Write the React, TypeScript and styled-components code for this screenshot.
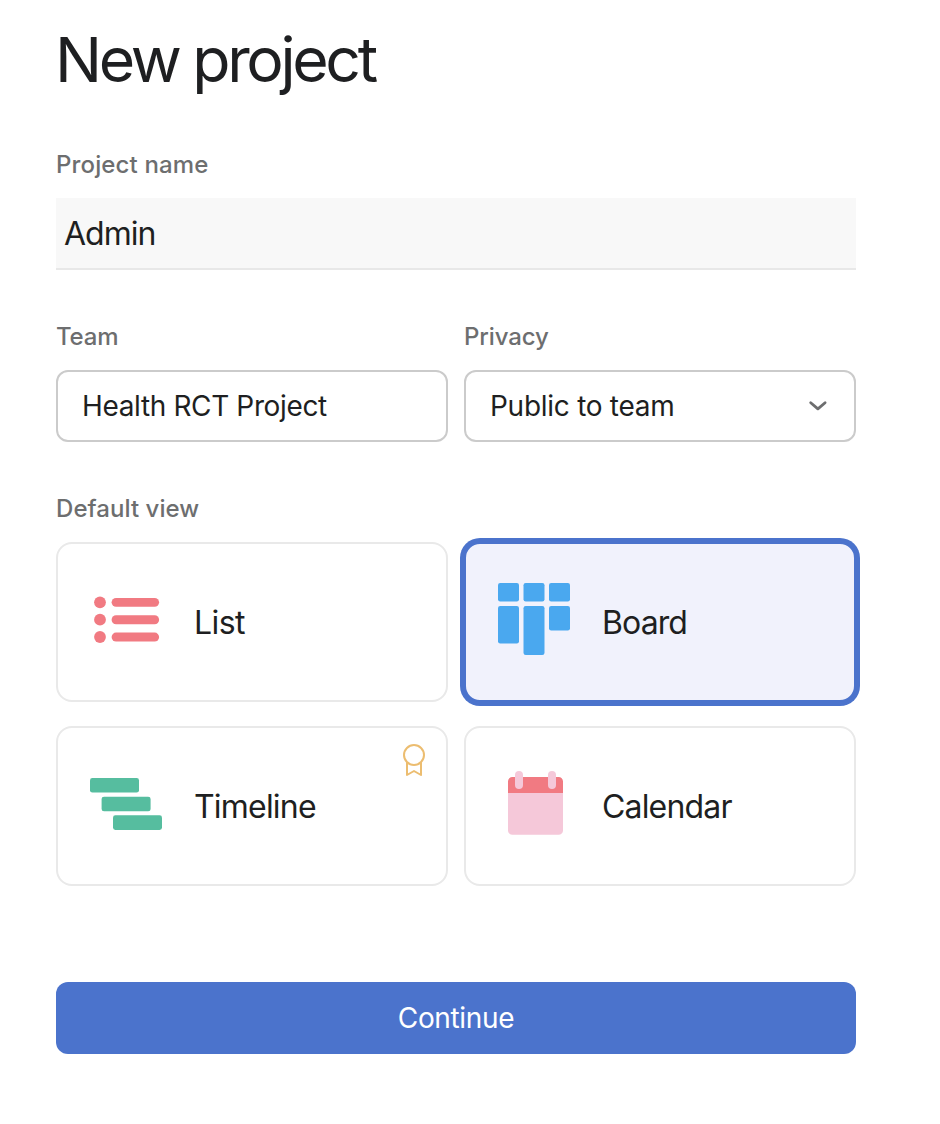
import React from "react";
import styled, { createGlobalStyle } from "styled-components";

const GlobalStyle = createGlobalStyle`
  *, *::before, *::after { box-sizing: border-box; }
  body {
    margin: 0;
    background: #fff;
    color: #1e1f21;
    font-family: Inter, "Liberation Sans", sans-serif;
    -webkit-font-smoothing: antialiased;
  }
  button, input { font: inherit; color: inherit; }
`;

const Form = styled.form`
  display: flex;
  flex-direction: column;
  width: 856px;
  min-height: 1124px;
  padding: 19px 0 0 56px;
`;

const Title = styled.h1`
  margin: 0 0 48px -1px;
  font-size: 62.5px;
  line-height: 80px;
  font-weight: 375;
  letter-spacing: -3.35px;
  word-spacing: -0.5px;
`;

const Field = styled.div`
  display: flex;
  flex-direction: column;
  gap: 15px;
  margin-bottom: 49px;
`;

const FieldRow = styled.div`
  display: grid;
  grid-template-columns: 1fr 1fr;
  gap: 16px;
`;

const Label = styled.span<{ $tracking?: number }>`
  font-size: 24px;
  line-height: 36px;
  font-weight: 500;
  letter-spacing: ${(p) => p.$tracking ?? 0}px;
  color: #6d6e6f;
  white-space: nowrap;
`;

const NameInput = styled.input`
  width: 100%;
  height: 72px;
  padding: 0 8px;
  border: 0;
  border-bottom: 2px solid #e8e8e8;
  border-radius: 0;
  outline: 0;
  background: #f8f8f8;
  font-size: 32px;
  letter-spacing: -1px;
`;

const Select = styled.button<{ $tracking?: number }>`
  display: flex;
  align-items: center;
  justify-content: space-between;
  height: 72px;
  padding: 0 24px;
  border: 2px solid #cbcbcb;
  border-radius: 12px;
  background: #fff;
  font-size: 28px;
  letter-spacing: ${(p) => p.$tracking ?? 0}px;
  white-space: nowrap;
`;

const Views = styled.div`
  display: grid;
  grid-template-columns: 1fr 1fr;
  gap: 24px 16px;
`;

const ViewCard = styled.button<{ $selected?: boolean }>`
  position: relative;
  display: flex;
  align-items: center;
  gap: 32px;
  height: 160px;
  padding: 0 32px;
  border: 2px solid ${(p) => (p.$selected ? "#4b73cc" : "#e9e9e9")};
  border-radius: 16px;
  background: ${(p) => (p.$selected ? "#f1f2fc" : "#fff")};
  box-shadow: ${(p) => (p.$selected ? "0 0 0 4px #4b73cc" : "none")};
`;

const ViewIcon = styled.svg`
  flex: none;
  width: 72px;
  height: 72px;
  margin-bottom: 6px;
`;

const ViewName = styled.span<{ $tracking?: number }>`
  padding-top: 2px;
  font-size: 32px;
  line-height: 48px;
  letter-spacing: ${(p) => p.$tracking ?? 0}px;
`;

const PremiumBadge = styled.svg`
  position: absolute;
  top: 14px;
  right: 20px;
  width: 24px;
  height: 36px;
`;

const Continue = styled.button`
  height: 72px;
  margin-top: 47px;
  border: 0;
  border-radius: 12px;
  background: #4b73cc;
  color: #fff;
  font-size: 28px;
  letter-spacing: -0.35px;
`;

const Chevron = () => (
  <svg width="24" height="24" viewBox="0 0 24 24" fill="none">
    <path d="M4.7 8.7 11.9 14.9 19.1 8.7" stroke="#6d6e6f" strokeWidth="2.8" strokeLinecap="round" strokeLinejoin="round" />
  </svg>
);

const ListIcon = () => (
  <ViewIcon viewBox="0 0 72 72" fill="#f17a82">
    {[19.3, 36.7, 54].map((y) => (
      <g key={y}>
        <circle cx="10" cy={y} r="5.9" />
        <rect x="21.6" y={y - 4.4} width="47.5" height="8.9" rx="4.45" />
      </g>
    ))}
  </ViewIcon>
);

const BoardIcon = () => (
  <ViewIcon viewBox="0 0 72 72" fill="#4aa8ef">
    <rect x="0" y="0" width="21" height="18.5" rx="2.2" />
    <rect x="25.5" y="0" width="21" height="18.5" rx="2.2" />
    <rect x="51" y="0" width="21" height="18.5" rx="2.2" />
    <rect x="0" y="23" width="21" height="37.5" rx="2.2" />
    <rect x="25.5" y="23" width="21" height="49" rx="2.2" />
    <rect x="51" y="23" width="21" height="24.5" rx="2.2" />
  </ViewIcon>
);

const TimelineIcon = () => (
  <ViewIcon viewBox="0 0 72 72" fill="#56bd9f">
    <rect x="0" y="11" width="49" height="14.6" rx="2.4" />
    <rect x="11.6" y="29.7" width="49" height="14.6" rx="2.4" />
    <rect x="23" y="48.3" width="49" height="14.6" rx="2.4" />
  </ViewIcon>
);

const CalendarIcon = () => (
  <ViewIcon viewBox="0 0 72 72">
    <path d="M10 26h55v37.4a4.4 4.4 0 0 1-4.4 4.4H14.4a4.4 4.4 0 0 1-4.4-4.4z" fill="#f5c8d9" />
    <path d="M10 26V14.4a4.4 4.4 0 0 1 4.4-4.4h46.2a4.4 4.4 0 0 1 4.4 4.4V26z" fill="#f17a82" />
    <rect x="17" y="4" width="8" height="18" rx="4" fill="#f5c8d9" />
    <rect x="50" y="4" width="8" height="18" rx="4" fill="#f5c8d9" />
  </ViewIcon>
);

const RibbonIcon = () => (
  <PremiumBadge viewBox="0 0 24 36" fill="none" stroke="#ecbd70" strokeWidth="2" strokeLinejoin="round">
    <circle cx="12" cy="13" r="10" />
    <path d="M5 20v13l7-4 7 4V20" />
  </PremiumBadge>
);

export default function App() {
  return (
    <>
      <GlobalStyle />
      <Form>
        <Title>New project</Title>
        <Field>
          <Label $tracking={0.15}>Project name</Label>
          <NameInput defaultValue="Admin" aria-label="Project name" />
        </Field>
        <FieldRow>
          <Field>
            <Label $tracking={-0.2}>Team</Label>
            <Select type="button" $tracking={-0.36}>Health RCT Project</Select>
          </Field>
          <Field>
            <Label $tracking={-0.1}>Privacy</Label>
            <Select type="button" $tracking={-0.27}>
              Public to team
              <Chevron />
            </Select>
          </Field>
        </FieldRow>
        <Field>
          <Label $tracking={0.06}>Default view</Label>
          <Views>
            <ViewCard type="button">
              <ListIcon />
              <ViewName $tracking={-0.6}>List</ViewName>
            </ViewCard>
            <ViewCard type="button" $selected>
              <BoardIcon />
              <ViewName $tracking={-0.9}>Board</ViewName>
            </ViewCard>
            <ViewCard type="button">
              <TimelineIcon />
              <ViewName $tracking={-0.8}>Timeline</ViewName>
              <RibbonIcon />
            </ViewCard>
            <ViewCard type="button">
              <CalendarIcon />
              <ViewName $tracking={-0.83}>Calendar</ViewName>
            </ViewCard>
          </Views>
        </Field>
        <Continue type="button">Continue</Continue>
      </Form>
    </>
  );
}
